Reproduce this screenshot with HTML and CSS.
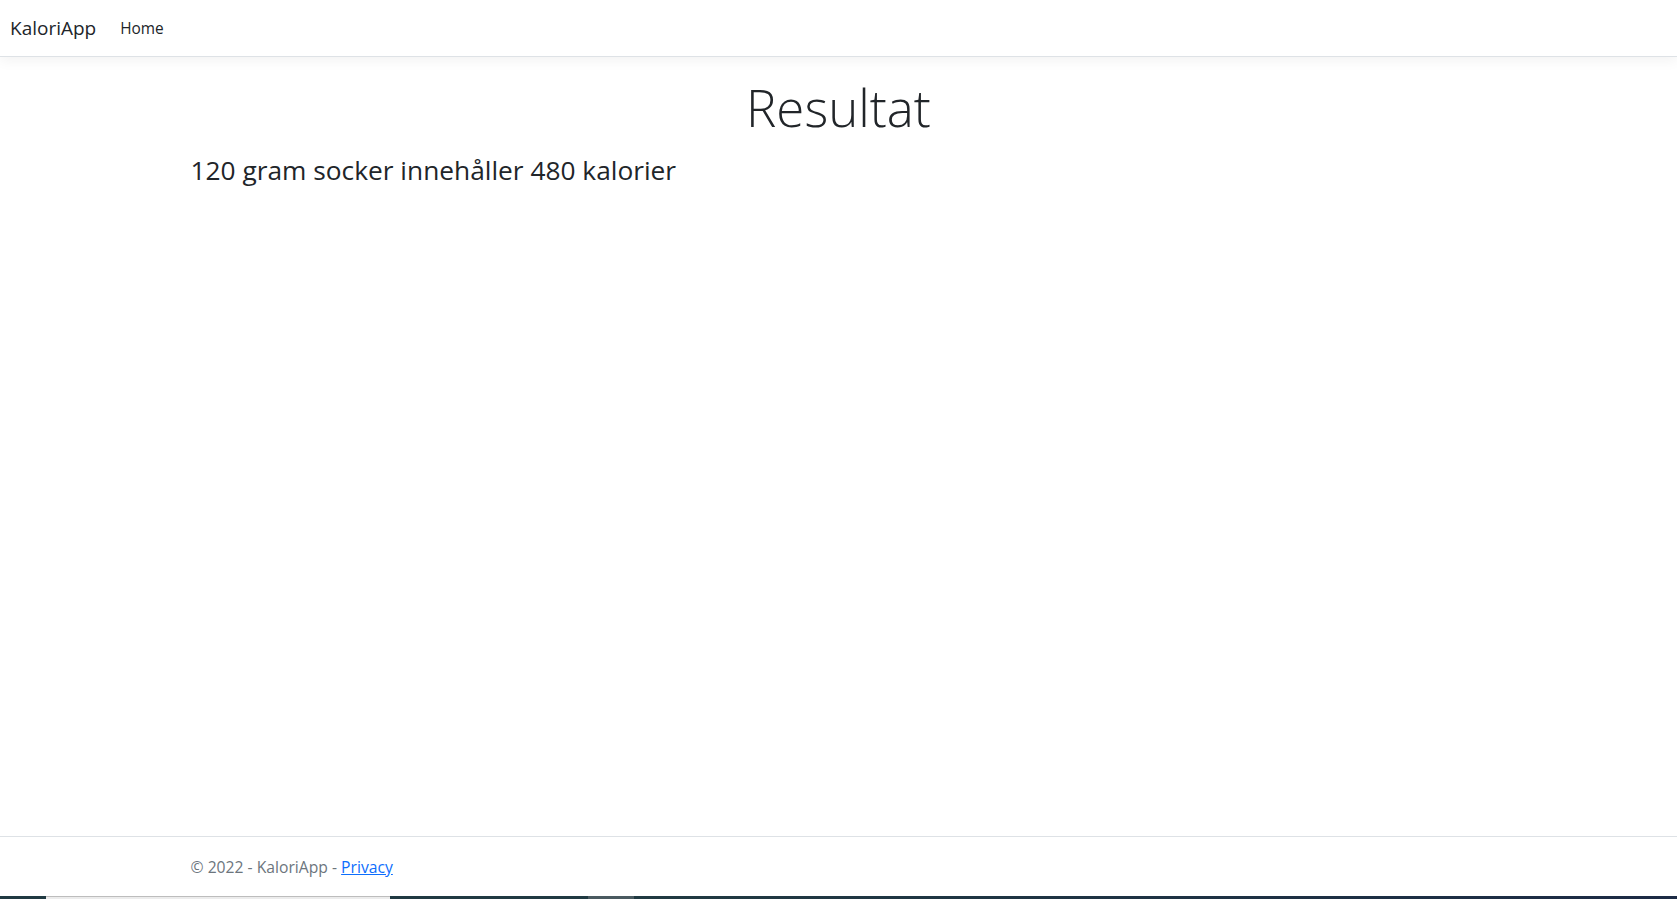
FILE: index.html
```html
<!DOCTYPE html>
<html lang="sv">
<head>
<meta charset="utf-8">
<title>Resultat - KaloriApp</title>
<link rel="stylesheet" href="styles.css">
</head>
<body>
<div class="page">
  <header>
    <nav class="navbar">
      <div class="nav-inner">
        <a class="brand" href="#">KaloriApp</a>
        <ul class="nav-list">
          <li><a class="nav-link" href="#">Home</a></li>
        </ul>
      </div>
    </nav>
  </header>
  <div class="container">
    <main class="main">
      <div class="text-center">
        <h1 class="display">Resultat</h1>
      </div>
      <h3 class="result">120 gram socker innehåller 480 kalorier</h3>
    </main>
  </div>
  <footer class="footer">
    <div class="container">
      &copy; 2022 - KaloriApp - <a class="footer-link" href="#">Privacy</a>
    </div>
  </footer>
</div>
<div class="taskbar">
  <div class="tb-seg tb-dark1"></div>
  <div class="tb-seg tb-light"></div>
  <div class="tb-seg tb-dark2"></div>
  <div class="tb-seg tb-gray"></div>
  <div class="tb-seg tb-dark3"></div>
</div>
</body>
</html>
```
FILE: styles.css
```css
* { box-sizing: border-box; }
html, body { margin: 0; padding: 0; }
body {
  font-family: "Open Sans", "Noto Sans", "Liberation Sans", sans-serif;
  font-size: 16px;
  line-height: 1.5;
  color: #212529;
  background: #fff;
  height: 899px;
  overflow: hidden;
  display: flex;
  flex-direction: column;
}
.page {
  height: 896px;
  display: flex;
  flex-direction: column;
}
.navbar {
  background: #fff;
  border-bottom: 1px solid #dee2e6;
  box-shadow: 0 4px 12px rgba(0,0,0,0.05);
  padding: 8px 0;
  margin-bottom: 16px;
}
.nav-inner {
  display: flex;
  align-items: center;
  padding: 0 10px;
}
.brand {
  font-size: 19px;
  line-height: 30px;
  padding: 5px 0;
  margin-right: 16px;
  color: #212529;
  text-decoration: none;
}
.nav-list {
  list-style: none;
  margin: 0;
  padding: 0;
  display: flex;
}
.nav-link {
  display: block;
  padding: 9px 8px 7px;
  color: #212529;
  text-decoration: none;
  font-size: 15.4px;
}
.container {
  width: 1320px;
  margin: 0 auto;
  padding: 0 12px;
}
.main {
  padding-bottom: 16px;
}
.text-center { text-align: center; }
.display {
  font-size: 51px;
  font-weight: 300;
  line-height: 1.2;
  margin: 4px 0 8px;
}
.result {
  font-size: 26.3px;
  font-weight: 400;
  line-height: 1.2;
  margin: 17px 0 8px;
}
.footer {
  margin-top: auto;
  border-top: 1px solid #dee2e6;
  color: #6c757d;
  line-height: 60px;
  height: 60px;
  white-space: nowrap;
  font-size: 15.7px;
}
.footer-link {
  color: #0d6efd;
  text-decoration: underline;
}
.taskbar {
  height: 3px;
  display: flex;
}
.tb-seg { height: 3px; }
.tb-dark1 { width: 46px; background: #203a42; }
.tb-light { width: 344px; background: #ececec; border-top: 1px solid #bdbdbd; }
.tb-dark2 { width: 198px; background: #203a42; }
.tb-gray { width: 46px; background: #4a5a60; }
.tb-dark3 { flex: 1; background: linear-gradient(90deg, #203a42, #1c2b45); }
```
